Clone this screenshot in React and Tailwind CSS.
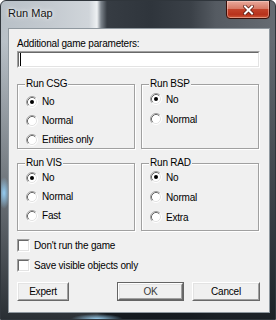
import React from "react";

function Radio({ checked }) {
  return (
    <svg width="12" height="12" viewBox="0 0 12 12" className="shrink-0">
      <circle cx="6" cy="6" r="5" fill="#fff" />
      <path d="M2.11 9.89 A5.5 5.5 0 0 1 9.89 2.11" stroke="#a0a0a0" fill="none" />
      <path d="M2.82 9.18 A4.5 4.5 0 0 1 9.18 2.82" stroke="#696969" fill="none" />
      <path d="M9.89 2.11 A5.5 5.5 0 0 1 2.11 9.89" stroke="#ffffff" fill="none" />
      <path d="M9.18 2.82 A4.5 4.5 0 0 1 2.82 9.18" stroke="#e3e3e3" fill="none" />
      {checked && <circle cx="6" cy="6" r="2" fill="#000" />}
    </svg>
  );
}

function RadioRow({ label, checked, h }) {
  return (
    <div className={`flex items-center gap-[4px] ${h}`}>
      <Radio checked={checked} />
      <span>{label}</span>
    </div>
  );
}

function Group({ title, className, children }) {
  return (
    <div
      className={`relative w-[118px] border border-[#a0a0a0] [box-shadow:1px_1px_0_#fff,inset_1px_1px_0_#fff] pl-[8px] ${className}`}
    >
      <span className="absolute -top-[8px] left-[7px] px-[1px] bg-[#f0f0f0] leading-[13px]">
        {title}
      </span>
      {children}
    </div>
  );
}

function Check({ label }) {
  return (
    <div className="flex items-center gap-[4px] h-[20px]">
      <div className="w-[13px] h-[13px] border border-t-[#a0a0a0] border-l-[#a0a0a0] border-b-white border-r-white">
        <div className="w-full h-full bg-white border border-t-[#696969] border-l-[#696969] border-b-[#e3e3e3] border-r-[#e3e3e3]" />
      </div>
      <span>{label}</span>
    </div>
  );
}

function Button({ label, className, isDefault, textClass = "" }) {
  const inner = (
    <div className="h-full border border-t-white border-l-white border-b-[#696969] border-r-[#696969]">
      <div
        className={`h-full flex items-center justify-center border border-t-[#e3e3e3] border-l-[#e3e3e3] border-b-[#a0a0a0] border-r-[#a0a0a0] bg-[#f0f0f0] ${textClass}`}
      >
        {label}
      </div>
    </div>
  );
  return (
    <div className={`h-[19px] ${className}`}>
      {isDefault ? (
        <div className="h-full border border-[#646464]">{inner}</div>
      ) : (
        inner
      )}
    </div>
  );
}

export default function App() {
  return (
    <div
      className="relative w-[276px] h-[320px] overflow-hidden flex flex-col rounded-t-[6px] border border-[#30363c] bg-[radial-gradient(ellipse_6px_16px_at_3px_192px,rgba(150,210,250,0.95),rgba(150,210,250,0)),radial-gradient(ellipse_26px_5px_at_96px_318px,rgba(160,215,250,0.95),rgba(160,215,250,0)),linear-gradient(180deg,rgba(0,0,0,0)_0px,rgba(0,0,0,0)_40px,rgba(15,20,25,0.85)_320px),linear-gradient(90deg,#b8c0c7_0px,#c4cad0_50px,#d0d5da_88px,#eef1f3_96px,#7c848c_100px,#363c43_106px,#2f353c_150px,#3b4148_190px,#555b62_215px,#666c73_276px)] font-['Liberation_Sans',Arial,sans-serif] text-[10px] tracking-[-0.2px] leading-[13px] text-black"
    >
      {/* Title bar */}
      <div className="h-[27px] shrink-0 flex items-start justify-between">
        <span className="pl-[7px] pt-[6px] text-[11px] tracking-normal leading-[13px] text-[#141414] [text-shadow:0_0_6px_rgba(255,255,255,0.9),0_0_3px_rgba(255,255,255,0.8)]">
          Run Map
        </span>
        <div className="mr-[5px] -mt-[1px] w-[44px] h-[19px] rounded-b-[4px] border border-[#3a0f08] bg-[linear-gradient(180deg,#e9a99c_0%,#d77a66_45%,#c2422a_50%,#b8321c_80%,#cf5a3a_100%)] [box-shadow:inset_0_0_0_1px_rgba(255,220,210,0.45)] flex items-center justify-center">
          <svg width="11" height="10" viewBox="0 0 11 10">
            <path
              d="M2 1.5 L9 8.5 M9 1.5 L2 8.5"
              stroke="#5a1a10"
              strokeWidth="3.6"
              strokeLinecap="square"
            />
            <path
              d="M2 1.5 L9 8.5 M9 1.5 L2 8.5"
              stroke="#ffffff"
              strokeWidth="2"
              strokeLinecap="square"
            />
          </svg>
        </div>
      </div>

      {/* Client area */}
      <div className="ml-[7px] mr-[5px] mb-[6px] flex-1 border border-[#8f989f] bg-[#f0f0f0] pl-[8px] pt-[8px] flex flex-col">
        <div className="leading-[13px]">Additional game parameters:</div>
        <div className="mt-[1px] w-[243px] h-[17px] border border-t-[#a0a0a0] border-l-[#a0a0a0] border-b-white border-r-white">
          <div className="h-full bg-white border border-t-[#696969] border-l-[#696969] border-b-[#e3e3e3] border-r-[#e3e3e3] flex items-center">
            <div className="ml-[1px] w-[1px] h-[13px] bg-black" />
          </div>
        </div>

        <div className="mt-[16px] flex gap-[6px]">
          <Group title="Run CSG" className="h-[65px] pt-[7px]">
            <RadioRow label="No" checked h="h-[19px]" />
            <RadioRow label="Normal" h="h-[19px]" />
            <RadioRow label="Entities only" h="h-[19px]" />
          </Group>
          <Group title="Run BSP" className="h-[65px] pt-[4px]">
            <RadioRow label="No" checked h="h-[20px]" />
            <RadioRow label="Normal" h="h-[20px]" />
          </Group>
        </div>

        <div className="mt-[14px] flex gap-[6px]">
          <Group title="Run VIS" className="h-[68px] pt-[4px]">
            <RadioRow label="No" checked h="h-[19px]" />
            <RadioRow label="Normal" h="h-[19px]" />
            <RadioRow label="Fast" h="h-[19px]" />
          </Group>
          <Group title="Run RAD" className="h-[68px] pt-[3px]">
            <RadioRow label="No" checked h="h-[20px]" />
            <RadioRow label="Normal" h="h-[20px]" />
            <RadioRow label="Extra" h="h-[20px]" />
          </Group>
        </div>

        <div className="mt-[4px] flex flex-col">
          <Check label="Don't run the game" />
          <Check label="Save visible objects only" />
        </div>

        <div className="mt-[7px] flex">
          <Button label="Expert" className="w-[52px]" />
          <Button label="OK" className="ml-[48px] w-[67px]" isDefault textClass="text-[#3a3a3a]" />
          <Button label="Cancel" className="ml-[8px] w-[68px]" />
        </div>
      </div>
    </div>
  );
}
